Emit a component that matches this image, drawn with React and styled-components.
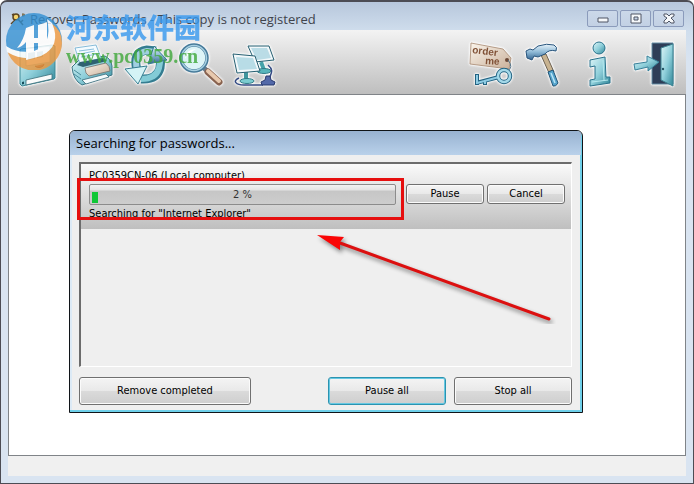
import React from 'react';
import styled, { createGlobalStyle } from 'styled-components';

const UI_FONT = '"Open Sans", "Noto Sans", sans-serif';
const SMALL_FONT = '"DejaVu Sans Condensed", "DejaVu Sans", sans-serif';

const GlobalStyle = createGlobalStyle`
  * {
    box-sizing: border-box;
  }
  body {
    margin: 0;
    background: #ffffff;
    font-family: ${UI_FONT};
    color: #000000;
  }
`;

const Window = styled.div`
  position: relative;
  display: flex;
  flex-direction: column;
  min-height: 100vh;
  padding: 0 7px 7px 7px;
  border: 1px solid #4c4c54;
  border-top-width: 2px;
  border-radius: 7px 7px 0 0;
  background: linear-gradient(#b7c7dc 0, #d0deed 30px, #d9e4f1 60px);
  overflow: hidden;
`;

const TitleBar = styled.header`
  display: flex;
  align-items: center;
  height: 28px;
  gap: 4px;
  padding: 5px 2px 0 2px;
`;

const WindowTitle = styled.h1`
  flex: 1;
  margin: 0;
  font-size: 13px;
  line-height: 18px;
  font-weight: 400;
  color: #3f444c;
  white-space: nowrap;
`;

const CaptionButtons = styled.div`
  display: flex;
  gap: 2px;
`;

const CaptionButton = styled.button`
  display: flex;
  align-items: center;
  justify-content: center;
  width: 31px;
  height: 17px;
  padding: 0;
  border: 1px solid #8b9bbb;
  border-radius: 2px;
  background: linear-gradient(#cbd8e9, #c3d1e4);
`;

const Toolbar = styled.div`
  display: flex;
  justify-content: space-between;
  height: 64px;
  padding: 12px 10px 6px 7px;
  background: linear-gradient(#f3f3f3, #bebebe);
`;

const ToolGroup = styled.div`
  display: flex;
  gap: 8px;
`;

const ToolButton = styled.button`
  width: 46px;
  height: 46px;
  padding: 0;
  border: 0;
  background: none;
  svg {
    display: block;
    overflow: visible;
    filter: drop-shadow(0 0 1px #ffffff) drop-shadow(0 0 1px #ffffff);
  }
`;

const Workspace = styled.main`
  display: flex;
  flex: 1;
  padding: 35px 102px 42px 60px;
  border: 1px solid #808488;
  background: #ffffff;
`;

const StatusBar = styled.footer`
  height: 20px;
  background: #f0f0f0;
`;

const Dialog = styled.section`
  display: flex;
  flex: 1;
  flex-direction: column;
  border: 1px solid #101418;
  border-radius: 6px 6px 0 0;
  background: #efefef;
  box-shadow: inset -2px -2px 0 #6fd0ea, inset 2px 0 0 #dceaf6;
  overflow: hidden;
`;

const DialogTitle = styled.h2`
  margin: 0 1px 0 0;
  padding: 3px 6px;
  font-size: 13px;
  line-height: 18px;
  font-weight: 400;
  background: linear-gradient(#98b2d1, #b9d1ea);
`;

const DialogBody = styled.div`
  display: flex;
  flex: 1;
  flex-direction: column;
  gap: 10px;
  padding: 7px 10px 7px 9px;
`;

const TaskList = styled.div`
  position: relative;
  flex: 1;
  border: 1px solid #ffffff;
  border-top: 2px solid #6c6c6c;
  border-left: 2px solid #6c6c6c;
`;

const TaskRow = styled.div`
  display: grid;
  grid-template-columns: minmax(0, 1fr) auto;
  align-content: start;
  gap: 1px 10px;
  height: 65px;
  padding: 4px 6px 0 8px;
  background: linear-gradient(#fafafa, #bfbfbf);
  font-family: ${SMALL_FONT};
  font-size: 11px;
`;

const TaskText = styled.div`
  grid-column: 1 / 3;
  line-height: 15px;
  white-space: nowrap;
`;

const ProgressBar = styled.div`
  position: relative;
  height: 21px;
  border: 1px solid #8c8c8c;
  border-radius: 2px;
  background: linear-gradient(#f2f2f2 0, #e4e4e4 5px, #c6c6c6 6px, #cdcdcd 100%);
  line-height: 19px;
  text-align: center;
  color: #333333;
`;

const ProgressFill = styled.span`
  position: absolute;
  left: 2px;
  bottom: 1px;
  height: 11px;
  background: #0fc736;
`;

const TaskButtons = styled.div`
  display: flex;
  gap: 3px;
`;

const Button = styled.button`
  width: ${props => props.$width}px;
  height: ${props => (props.$small ? 20 : 28)}px;
  padding: 0;
  border: 1px solid ${props => (props.$active ? '#2b93b0' : '#707070')};
  border-radius: 3px;
  background: linear-gradient(#f4f4f4 0%, #e9e9e9 48%, #dadada 52%, #cecece 100%);
  box-shadow: inset 0 0 0 1px ${props => (props.$active ? '#66c8e2' : '#fbfbfb')};
  font-family: ${SMALL_FONT};
  font-size: 11px;
  line-height: 16px;
  color: #000000;
`;

const Footer = styled.div`
  display: flex;
  gap: 8px;
`;

const Spacer = styled.div`
  flex: 1;
`;

const Highlight = styled.div`
  position: absolute;
  top: 14px;
  left: -4px;
  right: 167px;
  height: 42px;
  border: 3px solid #e60f0f;
`;

const Arrow = styled.svg`
  position: absolute;
  top: 64px;
  right: 15px;
`;

const Watermark = styled.div`
  position: absolute;
  top: 8px;
  left: 3px;
  display: flex;
  gap: 2px;
  pointer-events: none;
  opacity: 0.8;
`;

const WatermarkName = styled.div`
  font-family: "Noto Sans CJK SC", sans-serif;
  font-size: 27px;
  line-height: 34px;
  font-weight: 900;
  color: #3698ee;
`;

const WatermarkSite = styled.div`
  font-family: "Liberation Serif", serif;
  font-size: 20px;
  line-height: 24px;
  font-weight: 700;
  color: #3fa83a;
`;

const Defs = () => (
  <svg width="0" height="0" style={{ position: 'absolute' }} aria-hidden="true">
    <defs>
      <linearGradient id="teal" x1="0" y1="0" x2="1" y2="1">
        <stop offset="0" stopColor="#dff6f8" />
        <stop offset="0.5" stopColor="#8fcfda" />
        <stop offset="1" stopColor="#2f8698" />
      </linearGradient>
      <linearGradient id="steel" x1="0" y1="0" x2="0" y2="1">
        <stop offset="0" stopColor="#e9f4fb" />
        <stop offset="0.5" stopColor="#8eb9d6" />
        <stop offset="1" stopColor="#33638f" />
      </linearGradient>
      <linearGradient id="paper" x1="0" y1="0" x2="1" y2="1">
        <stop offset="0" stopColor="#ffffff" />
        <stop offset="1" stopColor="#cfe0ea" />
      </linearGradient>
      <linearGradient id="tan" x1="0" y1="0" x2="1" y2="1">
        <stop offset="0" stopColor="#fbf5ec" />
        <stop offset="1" stopColor="#c9b09a" />
      </linearGradient>
    </defs>
  </svg>
);

const Glyph = ({ children }) => (
  <svg width="46" height="46" viewBox="0 0 46 46" aria-hidden="true">
    {children}
  </svg>
);

const FloppyIcon = () => (
  <Glyph>
    <path d="M5 8 6 7 37 3 40 4V36L39 37 7 44 5 42Z" fill="url(#teal)" stroke="#3d8795" />
    <path d="M11 7 35 4V20L11 24Z" fill="url(#paper)" stroke="#7aa9b5" strokeWidth="0.7" />
    <path d="M13 11 20 10V17L13 18ZM22 10 28 9V15L22 16Z" fill="#8eb8c4" />
    <path d="M20 24A5 4 0 0 0 29 22" fill="#79534a" stroke="#48353a" />
    <path d="M11 38 37 32V37L11 43Z" fill="#f9fbfb" stroke="#386d78" strokeWidth="0.8" />
    <path d="M7 40 9 39.500V42L7 42.500Z" fill="#174e5b" />
  </Glyph>
);

const PrinterIcon = () => (
  <Glyph>
    <path d="M3 25 10 18 36 14Q42 17 43 24V33L13 43Q4 38 3 25Z" fill="url(#teal)" stroke="#3c7484" />
    <path d="M6 6 27 3 32 16 11 22Z" fill="#f3fbff" stroke="#6aa9ce" strokeWidth="0.8" />
    <path d="M10 9 25 7M11 12 26 9M12 15 28 12" stroke="#8bc0de" />
    <path d="M8 23 11 20 34 16 38 19 14 25Z" fill="#2f6272" />
    <path d="M16 26 37 21Q41 24 41 29L20 34Q16 32 16 26Z" fill="url(#tan)" stroke="#75706b" strokeWidth="0.8" />
    <path d="M13 38 37 32 40 35 17 42Z" fill="#f5fafb" stroke="#376b7a" strokeWidth="0.8" />
    <path d="M5 28 12 33M5 32 12 37" stroke="#4b8d9c" />
  </Glyph>
);

const RefreshIcon = () => (
  <Glyph>
    <path d="M18 37Q34 38 37 26L38 15" fill="none" stroke="#347c90" strokeWidth="9" />
    <path d="M18 37Q33 37 36 26L38 15" fill="none" stroke="#83cbd6" strokeWidth="6" />
    <path d="M14 28Q9 10 24 8L33 9" fill="none" stroke="#347c90" strokeWidth="9" />
    <path d="M14 28Q10 11 24 9L33 10" fill="none" stroke="#a0cfe0" strokeWidth="6" />
    <path d="M2 27 24 24 15 42Z" fill="#d4f3f6" stroke="#347c90" strokeLinejoin="round" />
    <path d="M25 22 31 4 44 18Z" fill="url(#steel)" stroke="#347c90" strokeLinejoin="round" />
  </Glyph>
);

const SearchIcon = () => (
  <Glyph>
    <path d="M27 26 31 30" stroke="#6a7b8b" strokeWidth="5" />
    <path d="M31 30 42 40" stroke="#896350" strokeWidth="7" strokeLinecap="round" />
    <path d="M31 29 42 39" stroke="#e8c9ae" strokeWidth="4" strokeLinecap="round" />
    <circle cx="17" cy="16" r="13" fill="#d5f1f5" fillOpacity="0.8" stroke="#467a99" strokeWidth="3.500" />
    <circle cx="17" cy="16" r="12.500" fill="none" stroke="#a8d0e2" strokeWidth="1.500" />
    <path d="M8 17Q9 7 19 7 12 11 8 17Z" fill="#ffffff" />
  </Glyph>
);

const NetworkIcon = () => (
  <Glyph>
    <path d="M30 20 33 28" stroke="#45a2a9" strokeWidth="4" />
    <ellipse cx="33" cy="29" rx="7" ry="2.500" fill="#58b5bb" stroke="#327c88" />
    <path d="M17 4 38 4 43 18 24 20Z" fill="#f2f8fa" stroke="#255e70" />
    <path d="M20 6 36 6 40 16 26 18Z" fill="#badce6" />
    <path d="M15 30V39" stroke="#41969e" strokeWidth="4" />
    <ellipse cx="16" cy="39" rx="7" ry="2.500" fill="#7bccd0" stroke="#327c88" />
    <path d="M2 12 24 14 29 29 6 31Z" fill="#f2f8fa" stroke="#255e70" />
    <path d="M5 15 22 16 26 27 8 28Z" fill="#b8dce6" />
    <path d="M8 36C1 39 5 43 13 43H32M37 23C44 29 39 32 38 38" fill="none" stroke="#344b84" strokeWidth="1.500" />
    <path d="M30 40 34 38 35 34 39 34 40 38 44 40 43 43 31 43Z" fill="#5369a9" stroke="#27386d" />
  </Glyph>
);

const OrderIcon = () => (
  <Glyph>
    <path d="M3 1 35 7 43 16 41 27 2 22Z" fill="url(#tan)" stroke="#a5876e" strokeWidth="0.8" />
    <circle cx="39" cy="18" r="2" fill="#6c4937" />
    <path d="M40 18Q46 25 39 30" fill="none" stroke="#516f83" />
    <text x="4" y="11" transform="rotate(7 4 11)" fontFamily="Liberation Sans, sans-serif" fontSize="10" fontWeight="700" fill="#815237">order</text>
    <text x="17" y="22" transform="rotate(4 17 22)" fontFamily="Liberation Sans, sans-serif" fontSize="10" fontWeight="700" fill="#815237">me</text>
    <path d="M31 35 8 41M9 32V43M17 38V43" fill="none" stroke="#236382" strokeWidth="4" />
    <circle cx="36" cy="34" r="6" fill="none" stroke="#236382" strokeWidth="4.500" />
    <path d="M31 35 9 41M9 33V42M17 38V42" fill="none" stroke="#8ecce4" strokeWidth="2" />
    <circle cx="36" cy="34" r="6" fill="none" stroke="#a3d8e8" strokeWidth="2.500" />
  </Glyph>
);

const HammerIcon = () => (
  <Glyph>
    <path d="M19 13 24 12 32 30 27 31Z" fill="#c8b391" stroke="#6b6051" />
    <path d="M26 30 31 28 36 41Q34 45 31 44Z" fill="#55a4cc" stroke="#225476" />
    <path d="M29 31 33 41" stroke="#b9e5f6" strokeWidth="1.500" />
    <path d="M4 9 8 7 11 8 16 4Q25 1 32 3 36 5 34 9 27 7 23 12L16 15 12 14 10 18 5 16Z" fill="url(#steel)" stroke="#28547c" />
  </Glyph>
);

const InfoIcon = () => (
  <Glyph>
    <circle cx="23" cy="6" r="6" fill="url(#teal)" stroke="#28708a" />
    <path d="M14 18 29 15 30 35 34 35V41L14 44V38L19 37V24L14 25Z" fill="url(#teal)" stroke="#28708a" strokeLinejoin="round" />
    <path d="M27 18 28 38M16 40 32 38" stroke="#b7e9ef" />
  </Glyph>
);

const ExitIcon = () => (
  <Glyph>
    <path d="M22 1H43V42H22Z" fill="#2e3d57" stroke="#5e88a0" />
    <path d="M31 6 43 2V44L31 38Z" fill="url(#teal)" stroke="#3c8291" />
    <circle cx="33" cy="27" r="1.200" fill="#245564" />
    <path d="M4 22 17 20V14L29 20 18 29V25L5 28Z" fill="url(#teal)" stroke="#377f98" />
  </Glyph>
);

// blue disc, white swoosh and an orange crescent along the lower right edge
const LogoMark = () => (
  <svg width="60" height="60" viewBox="0 0 60 60" aria-hidden="true">
    <circle cx="30" cy="31" r="28" fill="#318fd3" />
    <path d="M3 40Q20 48 36 42 54 34 47 13 58 20 58 33A28 28 0 0 1 3 40Z" fill="#ee973c" />
    <path d="M2 36Q14 44 30 41 49 35 43 9L48 13Q58 36 37 46 20 52 3 42Z" fill="#ffffff" />
    <path d="M22 18 30 15V48L22 50V32Q18 37 13 38 20 30 22 18ZM34 15 43 12V42L34 46V33H27V28H34Z" fill="#ffffff" />
  </svg>
);

const KeyIcon = () => (
  <svg width="16" height="16" viewBox="0 0 16 16" aria-hidden="true">
    <circle cx="6" cy="6" r="3" fill="#f4d36b" stroke="#5c4420" strokeWidth="1.500" />
    <path d="M8 8 13 14M11 11 13 9M1 13 5 9M2 4 4 3" stroke="#5c4420" strokeWidth="1.500" />
    <path d="M12 3 15 5M15 3 12 5M13 2V6" stroke="#7c6c4a" />
  </svg>
);

const captions = [
  { label: 'Minimize', path: 'M2 6H12V10H2Z' },
  { label: 'Maximize', path: 'M2 2H12V11H2ZM5 5H9V8H5Z' },
  { label: 'Close', path: 'M2 2H5L7 4 9 2H12V4L9 6 12 9V11H9L7 9 5 11H2V9L5 6 2 4Z' },
];

const leftTools = [
  { label: 'Save', icon: FloppyIcon },
  { label: 'Print', icon: PrinterIcon },
  { label: 'Refresh', icon: RefreshIcon },
  { label: 'Search', icon: SearchIcon },
  { label: 'Network', icon: NetworkIcon },
];

const rightTools = [
  { label: 'Order', icon: OrderIcon },
  { label: 'Settings', icon: HammerIcon },
  { label: 'About', icon: InfoIcon },
  { label: 'Exit', icon: ExitIcon },
];

const Tools = ({ items }) => (
  <ToolGroup>
    {items.map(({ label, icon: Icon }) => (
      <ToolButton key={label} type="button" aria-label={label}>
        <Icon />
      </ToolButton>
    ))}
  </ToolGroup>
);

const App = () => {
  const progress = 2;

  return (
    <>
      <GlobalStyle />
      <Defs />
      <Window>
        <TitleBar>
          <KeyIcon />
          <WindowTitle>Recover Passwords - This copy is not registered</WindowTitle>
          <CaptionButtons>
            {captions.map(({ label, path }) => (
              <CaptionButton key={label} type="button" aria-label={label}>
                <svg width="14" height="13" viewBox="0 0 14 13">
                  <path d={path} fill="#f6f8fa" fillRule="evenodd" stroke="#4e5565" />
                </svg>
              </CaptionButton>
            ))}
          </CaptionButtons>
        </TitleBar>
        <Toolbar>
          <Tools items={leftTools} />
          <Tools items={rightTools} />
        </Toolbar>
        <Workspace>
          <Dialog role="dialog" aria-labelledby="dialog-title">
            <DialogTitle id="dialog-title">Searching for passwords...</DialogTitle>
            <DialogBody>
              <TaskList>
                <TaskRow>
                  <TaskText>PC0359CN-06 (Local computer)</TaskText>
                  <ProgressBar role="progressbar" aria-label="Search progress" aria-valuenow={progress}>
                    <ProgressFill style={{ width: `${progress}%` }} />
                    {progress} %
                  </ProgressBar>
                  <TaskButtons>
                    <Button type="button" $width={78} $small>Pause</Button>
                    <Button type="button" $width={78} $small>Cancel</Button>
                  </TaskButtons>
                  <TaskText>Searching for "Internet Explorer"</TaskText>
                </TaskRow>
                <Highlight />
                <Arrow width="240" height="96" viewBox="0 0 240 96" aria-hidden="true">
                  <g style={{ filter: 'drop-shadow(2px 3px 2px rgba(0, 0, 0, 0.45))' }}>
                    <path d="M24 15 233 91" stroke="#dc1010" strokeWidth="3" strokeLinecap="round" />
                    <path d="M1 7 28 9 24 14 24 22Z" fill="#fa0505" />
                  </g>
                </Arrow>
              </TaskList>
              <Footer>
                <Button type="button" $width={172}>Remove completed</Button>
                <Spacer />
                <Button type="button" $width={118} $active>Pause all</Button>
                <Button type="button" $width={118}>Stop all</Button>
              </Footer>
            </DialogBody>
          </Dialog>
        </Workspace>
        <StatusBar />
        <Watermark>
          <LogoMark />
          <div>
            <WatermarkName>河东软件园</WatermarkName>
            <WatermarkSite>www.pc0359.cn</WatermarkSite>
          </div>
        </Watermark>
      </Window>
    </>
  );
};

export default App;
